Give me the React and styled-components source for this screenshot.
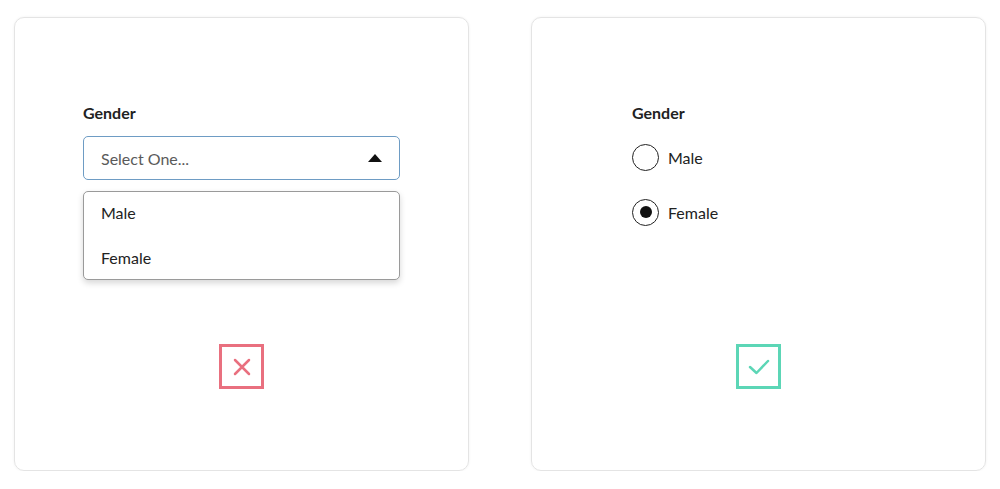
import React from "react";
import styled, { createGlobalStyle } from "styled-components";

const Global = createGlobalStyle`
  html, body { margin: 0; padding: 0; background: #ffffff; }
  body { font-family: Lato, "Open Sans", Arial, sans-serif; color: #222; }
`;

const Page = styled.div`
  display: flex;
  gap: 62px;
  padding: 17px 14px 0 14px;
`;

const Card = styled.div`
  box-sizing: border-box;
  width: 455px;
  height: 454px;
  border: 1px solid #e4e4e4;
  border-radius: 10px;
  box-shadow: 0 0 3px rgba(0, 0, 0, 0.06);
  display: flex;
  flex-direction: column;
  padding: ${(p) => (p.$wide ? "85px 68px 81px 68px" : "85px 68px 81px 100px")};
`;

const Label = styled.div`
  font-size: 16px;
  font-weight: 700;
  line-height: 20px;
  color: #222;
  margin-bottom: 13px;
`;

const Select = styled.div`
  box-sizing: border-box;
  height: 44px;
  border: 1px solid #6e9cc4;
  border-radius: 5px;
  display: flex;
  align-items: center;
  justify-content: space-between;
  padding: 0 17px 0 17px;
  font-size: 16px;
  color: #5a5a5a;
`;

const Caret = styled.span`
  width: 0;
  height: 0;
  border-left: 7px solid transparent;
  border-right: 7px solid transparent;
  border-bottom: 8px solid #111;
`;

const Menu = styled.div`
  box-sizing: border-box;
  margin-top: 11px;
  padding: 11px 0 11px;
  display: flex;
  flex-direction: column;
  gap: 25px;
  border: 1px solid #9a9a9a;
  border-radius: 5px;
  box-shadow: 0 3px 6px rgba(0, 0, 0, 0.16);
  background: #fff;
`;

const MenuItem = styled.div`
  line-height: 20px;
  padding-left: 17px;
  font-size: 16px;
  color: #222;
`;

const RadioRow = styled.label`
  display: flex;
  align-items: center;
  gap: 9px;
  height: 26px;
  font-size: 16px;
  color: #222;
  margin-top: ${(p) => p.$top}px;
`;

const Circle = styled.span`
  box-sizing: border-box;
  width: 27px;
  height: 27px;
  border-radius: 50%;
  border: 1.5px solid #222;
  display: flex;
  align-items: center;
  justify-content: center;
  &::after {
    content: "";
    width: 12px;
    height: 12px;
    border-radius: 50%;
    background: #111;
    display: ${(p) => (p.$checked ? "block" : "none")};
  }
`;

const Verdict = styled.div`
  box-sizing: border-box;
  margin-top: auto;
  align-self: center;
  width: 45px;
  height: 45px;
  border: 3px solid ${(p) => p.$color};
  display: flex;
  align-items: center;
  justify-content: center;
  transform: translateX(${(p) => p.$shift}px);
`;

export default function App() {
  return (
    <>
      <Global />
      <Page>
        <Card $wide>
          <Label>Gender</Label>
          <Select>
            <span>Select One...</span>
            <Caret />
          </Select>
          <Menu>
            <MenuItem>Male</MenuItem>
            <MenuItem>Female</MenuItem>
          </Menu>
          <Verdict $color="#e9707f" $shift={0}>
            <svg width="20" height="20" viewBox="0 0 20 20">
              <path d="M3 3 L17 17 M17 3 L3 17" stroke="#e9707f" strokeWidth="2.5" strokeLinecap="round" />
            </svg>
          </Verdict>
        </Card>
        <Card>
          <Label>Gender</Label>
          <RadioRow $top={8}>
            <Circle />
            Male
          </RadioRow>
          <RadioRow $top={29}>
            <Circle $checked />
            Female
          </RadioRow>
          <Verdict $color="#5cd6b6" $shift={-16}>
            <svg width="24" height="20" viewBox="0 0 24 20">
              <path d="M3 10 L9.5 16 L21 4" stroke="#5cd6b6" strokeWidth="2.5" fill="none" strokeLinecap="round" strokeLinejoin="round" />
            </svg>
          </Verdict>
        </Card>
      </Page>
    </>
  );
}
